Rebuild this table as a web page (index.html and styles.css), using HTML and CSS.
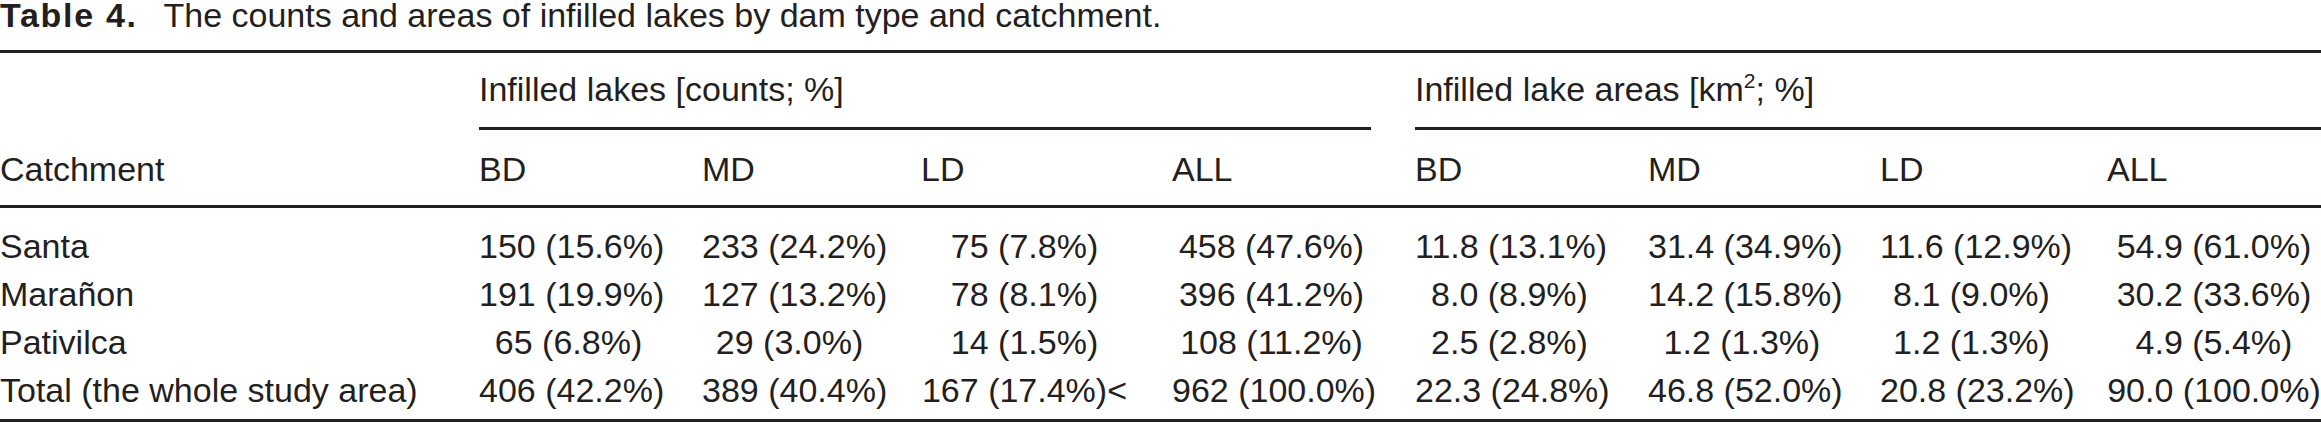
FILE: index.html
```html
<!DOCTYPE html>
<html lang="en">
<head>
<meta charset="utf-8">
<title>Table 4. Infilled lakes by dam type and catchment</title>
<link rel="stylesheet" href="styles.css">
</head>
<body>
<div class="page">
  <p class="caption"><span class="label">Table 4.</span> The counts and areas of infilled lakes by dam type and catchment.</p>
  <div class="tbl" role="table">
    <div class="row grid group" role="row">
      <div class="c"></div>
      <div class="c span4"><div class="grp">Infilled lakes [counts; %]</div></div>
      <div class="c span4"><div class="grp">Infilled lake areas [km<sup class="sup">2</sup>; %]</div></div>
    </div>
    <div class="row grid cols" role="row">
      <div class="c">Catchment</div>
      <div class="c">BD</div>
      <div class="c">MD</div>
      <div class="c">LD</div>
      <div class="c">ALL</div>
      <div class="c">BD</div>
      <div class="c">MD</div>
      <div class="c">LD</div>
      <div class="c">ALL</div>
    </div>
    <div class="body">
      <div class="row grid data" role="row">
        <div class="c">Santa</div>
        <div class="c">150 (15.6%)</div>
        <div class="c">233 (24.2%)</div>
        <div class="c">75 (7.8%)</div>
        <div class="c">458 (47.6%)</div>
        <div class="c">11.8 (13.1%)</div>
        <div class="c">31.4 (34.9%)</div>
        <div class="c">11.6 (12.9%)</div>
        <div class="c">54.9 (61.0%)</div>
      </div>
      <div class="row grid data" role="row">
        <div class="c">Marañon</div>
        <div class="c">191 (19.9%)</div>
        <div class="c">127 (13.2%)</div>
        <div class="c">78 (8.1%)</div>
        <div class="c">396 (41.2%)</div>
        <div class="c">8.0 (8.9%)</div>
        <div class="c">14.2 (15.8%)</div>
        <div class="c">8.1 (9.0%)</div>
        <div class="c">30.2 (33.6%)</div>
      </div>
      <div class="row grid data" role="row">
        <div class="c">Pativilca</div>
        <div class="c">65 (6.8%)</div>
        <div class="c">29 (3.0%)</div>
        <div class="c">14 (1.5%)</div>
        <div class="c">108 (11.2%)</div>
        <div class="c">2.5 (2.8%)</div>
        <div class="c">1.2 (1.3%)</div>
        <div class="c">1.2 (1.3%)</div>
        <div class="c">4.9 (5.4%)</div>
      </div>
      <div class="row grid data" role="row">
        <div class="c">Total (the whole study area)</div>
        <div class="c">406 (42.2%)</div>
        <div class="c">389 (40.4%)</div>
        <div class="c">167 (17.4%)&lt;</div>
        <div class="c">962 (100.0%)</div>
        <div class="c">22.3 (24.8%)</div>
        <div class="c">46.8 (52.0%)</div>
        <div class="c">20.8 (23.2%)</div>
        <div class="c">90.0 (100.0%)</div>
      </div>
    </div>
  </div>
</div>
</body>
</html>
```
FILE: styles.css
```css
* {
  box-sizing: border-box;
}

html,
body {
  margin: 0;
  padding: 0;
  background: #ffffff;
}

body {
  font-family: "Liberation Sans", Arial, sans-serif;
  color: #231f20;
}

.page {
  width: 2321px;
}

.caption {
  margin: 0;
  height: 30px;
  font-size: 34px;
  line-height: 30px;
  white-space: nowrap;
}

.label {
  font-weight: 700;
  letter-spacing: 0.05em;
  margin-right: 0.5em;
}

.tbl {
  margin-top: 20px;
  border-top: 3px solid #231f20;
  border-bottom: 3px solid #231f20;
  font-size: 34px;
  line-height: 48px;
}

.grid {
  display: grid;
  grid-template-columns: 457px 223px 219px 251px 243px 233px 232px 227px 236px;
}

.c {
  padding: 0 22px;
  white-space: nowrap;
}

.c:first-child {
  padding-left: 0;
}

.c:last-child {
  padding-right: 0;
}

.span4 {
  grid-column: span 4;
}

.grp {
  padding: 12px 0 14px;
  border-bottom: 3px solid #231f20;
}

.sup {
  font-size: 0.62em;
  line-height: 0;
  vertical-align: 0.6em;
}

.cols {
  padding: 15px 0 12px;
  border-bottom: 3px solid #231f20;
}

.body {
  padding: 14px 0 5px;
}

.data .c {
  text-align: center;
}

.data .c:first-child {
  text-align: left;
}
```
